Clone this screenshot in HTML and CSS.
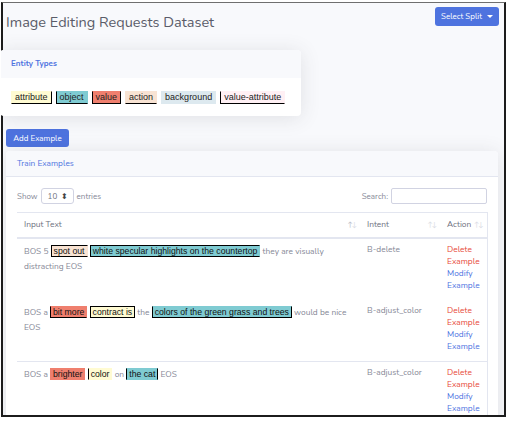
FILE: index.html
```html
<!DOCTYPE html>
<html lang="en">
<head>
<meta charset="utf-8">
<title>Image Editing Requests Dataset</title>
<link rel="stylesheet" href="styles.css">
</head>
<body>
<div class="frame">
  <div class="topbar">
    <h1 class="title">Image Editing Requests Dataset</h1>
    <button class="btn btn-split">Select Split <span class="caret"></span></button>
  </div>

  <div class="card card-entities">
    <div class="card-header">Entity Types</div>
    <div class="card-body entity-list">
      <span class="ent c-attribute br bb">attribute</span>
      <span class="ent c-object bl bb">object</span>
      <span class="ent c-value bl br bb">value</span>
      <span class="ent c-action bb">action</span>
      <span class="ent c-background">background</span>
      <span class="ent c-value-attribute bl bb">value-attribute</span>
    </div>
  </div>

  <button class="btn btn-add">Add Example</button>

  <div class="card card-train">
    <div class="card-header">Train Examples</div>
    <div class="card-body train-body">
      <div class="dt-controls">
        <div class="dt-length">Show <span class="select">10 <span class="updown">&#x2B0D;</span></span> entries</div>
        <div class="dt-search">Search: <span class="input"></span></div>
      </div>
      <table class="dt">
        <colgroup>
          <col class="col-text">
          <col class="col-intent">
          <col class="col-action">
        </colgroup>
        <thead>
          <tr>
            <th><div class="th-in"><span>Input Text</span><span class="sort"><span class="on">&#8593;</span>&#8595;</span></div></th>
            <th><div class="th-in"><span>Intent</span><span class="sort">&#8593;&#8595;</span></div></th>
            <th><div class="th-in"><span>Action</span><span class="sort">&#8593;&#8595;</span></div></th>
          </tr>
        </thead>
        <tbody>
          <tr>
            <td class="txt">BOS 5 <span class="tag c-action bl bt bb">spot out</span> <span class="tag c-object bl bt bb">white specular highlights on the countertop</span> they are visually<br>distracting EOS</td>
            <td class="intent">B-delete</td>
            <td class="act"><a class="del">Delete<br>Example</a><br><a class="mod">Modify<br>Example</a></td>
          </tr>
          <tr>
            <td class="txt">BOS a <span class="tag c-value bl bb">bit more</span> <span class="tag c-attribute bl bt br bb">contract is</span> the <span class="tag c-object bl br bb">colors of the green grass and trees</span> would be nice<br>EOS</td>
            <td class="intent">B-adjust_color</td>
            <td class="act"><a class="del">Delete<br>Example</a><br><a class="mod">Modify<br>Example</a></td>
          </tr>
          <tr class="sep">
            <td class="txt">BOS a <span class="tag c-value">brighter</span> <span class="tag c-attribute bl">color</span> on <span class="tag c-object bl br">the cat</span> EOS</td>
            <td class="intent">B-adjust_color</td>
            <td class="act"><a class="del">Delete<br>Example</a><br><a class="mod">Modify<br>Example</a></td>
          </tr>
        </tbody>
      </table>
    </div>
  </div>
</div>
</body>
</html>
```

FILE: styles.css
```css
* { box-sizing: border-box; }

body {
  margin: 0;
  background: #ffffff;
  font-family: "Nunito", "Lato", "Open Sans", sans-serif;
  color: #858796;
}

.frame {
  position: relative;
  margin: 2px 0 0 1px;
  width: 505px;
  height: 415px;
  background: #f8f9fc;
  overflow: hidden;
}

.frame::after {
  content: "";
  position: absolute;
  inset: 0;
  border: 2px solid #1c1c1c;
  border-top: 1px solid #6f6f6f;
  pointer-events: none;
  z-index: 1;
}

.topbar {
  display: flex;
  justify-content: space-between;
  align-items: flex-start;
  height: 48px;
  padding: 5px 7px 0 5px;
}

.title {
  margin: 6px 0 0 0;
  font-size: 14.5px;
  line-height: 18px;
  font-weight: 400;
  color: #5a5c69;
}

.btn {
  border: none;
  border-radius: 3px;
  background: #4e73df;
  color: #ffffff;
  font-family: inherit;
  font-size: 8px;
  padding: 0;
  display: flex;
  align-items: center;
  justify-content: center;
}

.btn-split {
  width: 64px;
  height: 19px;
  gap: 5px;
}

.caret {
  width: 0;
  height: 0;
  border-left: 3px solid transparent;
  border-right: 3px solid transparent;
  border-top: 3px solid #ffffff;
}

.card {
  background: #ffffff;
  border-radius: 4px;
  box-shadow: 0 2px 20px 0 rgba(58, 59, 69, 0.13);
  overflow: hidden;
}

.card-header {
  background: #f8f9fc;
  color: #4e73df;
  font-size: 8px;
  font-weight: 700;
  padding: 0 11px;
}

.card-entities {
  position: relative;
  z-index: 2;
  margin-left: -1px;
  width: 301px;
  height: 66px;
}

.card-entities .card-header {
  height: 28px;
  line-height: 28px;
}

.entity-list {
  display: flex;
  flex-wrap: nowrap;
  gap: 4px;
  padding: 13px 0 0 11px;
}

.ent {
  flex: none;
  white-space: nowrap;
  font-family: "Liberation Sans", Arial, sans-serif;
  font-size: 9px;
  line-height: 11px;
  height: 13px;
  padding: 0 3px;
  color: #222222;
  border: 1px solid transparent;
}

.c-attribute { background: #fffbd2; }
.c-object { background: #7fcbd2; }
.c-value { background: #ef7f6e; }
.c-action { background: #f8e3d3; }
.c-background { background: #dde9ef; }
.c-value-attribute { background: #fff0f4; }

.bl { border-left-color: #000000 !important; }
.br { border-right-color: #000000 !important; }
.bt { border-top-color: #000000 !important; }
.bb { border-bottom-color: #000000 !important; }

.btn-add {
  margin: 13px 0 0 5px;
  width: 63px;
  height: 18px;
}

.card-train {
  margin: 4px 0 0 5px;
  width: 492px;
  height: 300px;
}

.card-train .card-header {
  height: 26px;
  line-height: 26px;
  border-bottom: 1px solid #e3e6f0;
  font-size: 8.3px;
  font-weight: 400;
}

.train-body {
  padding: 11px 11px 0 11px;
}

.dt-controls {
  display: flex;
  justify-content: space-between;
  align-items: center;
  height: 16px;
  font-size: 8px;
  color: #858796;
}

.dt-length, .dt-search {
  display: flex;
  align-items: center;
  gap: 3px;
}

.select {
  display: inline-flex;
  align-items: center;
  justify-content: space-between;
  width: 33px;
  height: 16px;
  padding: 0 5px 0 6px;
  border: 1px solid #d1d3e2;
  border-radius: 3px;
  color: #6e707e;
  font-size: 8px;
  background: #ffffff;
}

.updown {
  font-size: 8px;
  color: #444;
}

.input {
  display: inline-block;
  width: 96px;
  height: 16px;
  border: 1px solid #d1d3e2;
  border-radius: 2px;
  background: #ffffff;
}

.dt {
  margin-top: 8px;
  width: 470px;
  border-collapse: collapse;
  table-layout: fixed;
  border-top: 1px solid #e3e6f0;
  border-right: 1px solid #e3e6f0;
  font-size: 8.4px;
}

.col-text { width: 343px; }
.col-intent { width: 80px; }
.col-action { width: 47px; }

.dt th {
  height: 25px;
  padding: 0 4px 0 7px;
  font-weight: 400;
  color: #6e707e;
  text-align: left;
  border-bottom: 2px solid #e3e6f0;
}

.th-in {
  display: flex;
  justify-content: space-between;
  align-items: center;
}

.sort {
  font-size: 7px;
  color: #d9dbe4;
  letter-spacing: -1px;
}

.sort .on { color: #b7b9c6; }

.dt td {
  vertical-align: top;
  padding: 5px 7px 8px 7px;
  color: #858796;
}

.dt tr.sep td {
  border-top: 1px solid #e3e6f0;
}

.txt {
  line-height: 15px;
  white-space: nowrap;
}

.tag {
  font-family: "Liberation Sans", Arial, sans-serif;
  font-size: 8.7px;
  line-height: 10px;
  padding: 0 2px;
  color: #111111;
  border: 1px solid transparent;
  white-space: nowrap;
}

.intent {
  line-height: 12px;
}

.act {
  line-height: 12px;
  padding-right: 0 !important;
}

.del { color: #e74a3b; }
.mod { color: #4e73df; }
```
